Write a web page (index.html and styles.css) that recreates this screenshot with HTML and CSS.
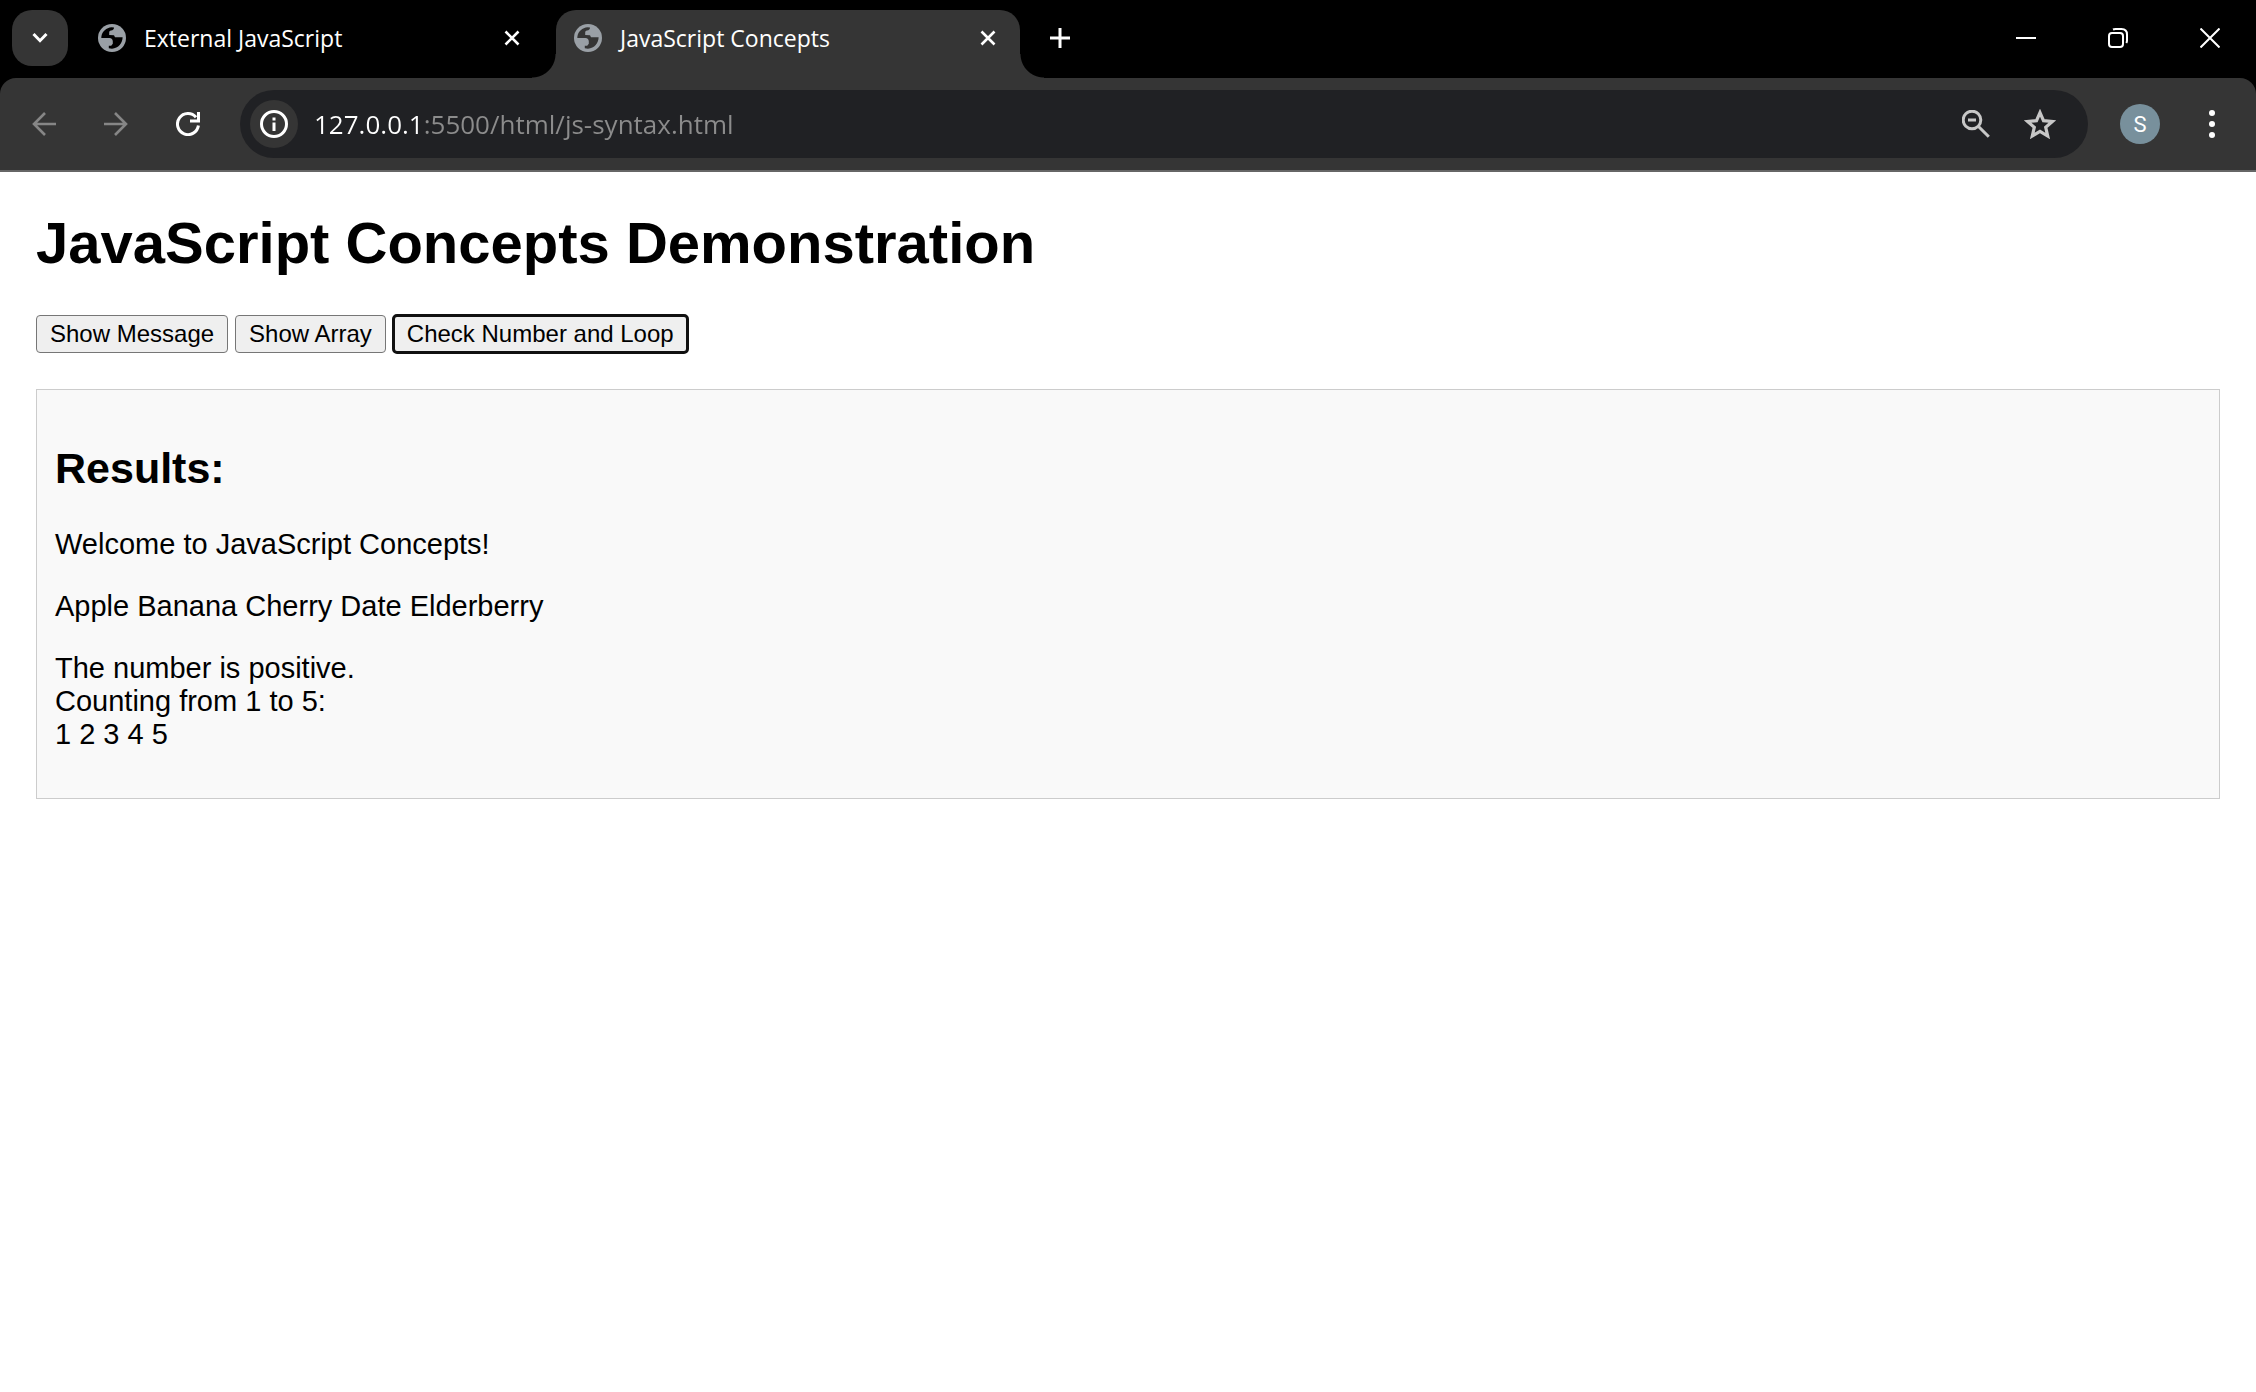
FILE: index.html
```html
<!DOCTYPE html>
<html lang="en">
<head>
<meta charset="utf-8">
<meta name="viewport" content="width=device-width, initial-scale=1">
<title>JavaScript Concepts</title>
<link rel="stylesheet" href="styles.css">
</head>
<body>
<svg class="defs" aria-hidden="true">
  <symbol id="globe" viewBox="0 0 28 28">
    <circle cx="14" cy="14" r="14" fill="#9aa0a6"/>
    <path class="land" d="M3.4 12.5C4 7.6 8.4 3.6 13.6 3.3L16 3.6C16 5.4 15 6.4 13 6.6C11.700 6.700 11.200 7.500 11.200 8.700L11.200 11L16 11.200L17 13.300L24.600 13.300C24.700 18.700 20.400 24.600 14 24.700C12.900 24.700 11.800 24.500 10.800 24.200L10.800 21.800L13.200 21.800L14.800 19.800L14.800 17.500C14.800 15.500 13.500 14.200 11.500 14.100L3.300 14Z"/>
  </symbol>
  <symbol id="close" viewBox="0 0 16 16">
    <path d="M1.500 1.500L14.500 14.500M14.500 1.500L1.500 14.500" fill="none" stroke="currentColor" stroke-width="2.600"/>
  </symbol>
</svg>

<header class="browser">
  <div class="tabstrip">
    <button class="tab-search" type="button" aria-label="Search tabs">
      <svg width="16" height="12" viewBox="0 0 16 12"><path d="M1.500 2L8 8.700L14.500 2" fill="none" stroke="currentColor" stroke-width="3"/></svg>
    </button>
    <div class="tabs">
      <div class="tab">
        <button class="tab-label" type="button"><svg width="28" height="28"><use href="#globe"/></svg><span>External JavaScript</span></button>
        <button class="tab-close" type="button" aria-label="Close tab"><svg width="16" height="16"><use href="#close"/></svg></button>
      </div>
      <div class="tab tab-active">
        <button class="tab-label" type="button"><svg width="28" height="28"><use href="#globe"/></svg><span>JavaScript Concepts</span></button>
        <button class="tab-close" type="button" aria-label="Close tab"><svg width="16" height="16"><use href="#close"/></svg></button>
      </div>
    </div>
    <button class="new-tab" type="button" aria-label="New tab">
      <svg width="20" height="20" viewBox="0 0 20 20"><path d="M10 0V20M0 10H20" stroke="currentColor" stroke-width="3"/></svg>
    </button>
    <div class="window-controls">
      <button type="button" aria-label="Minimize"><svg width="20" height="20" viewBox="0 0 20 20"><path d="M0 10H20" stroke="currentColor" stroke-width="2"/></svg></button>
      <button type="button" aria-label="Restore"><svg width="20" height="20" viewBox="0 0 20 20" fill="none" stroke="currentColor" stroke-width="2"><rect x="1" y="5" width="14" height="14" rx="3"/><path d="M5 1.500Q6 1 7.500 1H13.500Q19 1 19 6.500V12.500Q19 14 18.300 15"/></svg></button>
      <button type="button" aria-label="Close"><svg width="20" height="20" viewBox="0 0 20 20"><path d="M.500 .500L19.500 19.500M19.500 .500L.500 19.500" stroke="currentColor" stroke-width="2"/></svg></button>
    </div>
  </div>

  <div class="toolbar">
    <div class="nav">
      <button class="nav-off" type="button" aria-label="Back"><svg width="24" height="24" viewBox="0 0 24 24" fill="none" stroke="currentColor" stroke-width="2.600"><path d="M24 12H2M13 1L2 12L13 23"/></svg></button>
      <button class="nav-off" type="button" aria-label="Forward"><svg width="24" height="24" viewBox="0 0 24 24" fill="none" stroke="currentColor" stroke-width="2.600"><path d="M0 12H22M11 1L22 12L11 23"/></svg></button>
      <button type="button" aria-label="Reload"><svg width="24" height="24" viewBox="0 0 24 24"><path d="M22.400 13.500A10.500 10.500 0 1 1 20 5.300" fill="none" stroke="currentColor" stroke-width="3"/><path d="M21 0H24V10.500H14V7.500H21Z" fill="currentColor"/></svg></button>
    </div>
    <div class="omnibox">
      <button class="site-info" type="button" aria-label="View site information"><svg width="28" height="28" viewBox="0 0 28 28"><circle cx="14" cy="14" r="12.500" fill="none" stroke="currentColor" stroke-width="3"/><path d="M14 12.500V21M14 7.500V10.500" stroke="currentColor" stroke-width="3"/></svg></button>
      <input class="address" type="text" aria-label="Address" value="127.0.0.1:5500/html/js-syntax.html">
      <button class="action" type="button" aria-label="Zoom"><svg width="28" height="28" viewBox="0 0 28 28" fill="none" stroke="currentColor" stroke-width="3"><circle cx="10" cy="10" r="8.800"/><path d="M16.500 16.500L26.800 26.800M6 10H14"/></svg></button>
      <button class="action" type="button" aria-label="Bookmark this tab"><svg width="32" height="30" viewBox="0 0 32 30"><path d="M16 3.600L19.500 11.700L28.300 12.500L21.700 18.300L23.700 27L16 22.400L8.300 27L10.300 18.300L3.700 12.500L12.500 11.700Z" fill="none" stroke="currentColor" stroke-width="3.200"/></svg></button>
    </div>
    <button class="avatar" type="button" aria-label="Profile">S</button>
    <button class="menu" type="button" aria-label="Menu"><svg width="6" height="28" viewBox="0 0 6 28" fill="currentColor"><circle cx="3" cy="3" r="3"/><circle cx="3" cy="14" r="3"/><circle cx="3" cy="25" r="3"/></svg></button>
  </div>
</header>

<main class="page">
  <h1>JavaScript Concepts Demonstration</h1>
  <div class="buttons">
    <button type="button">Show Message</button>
    <button type="button">Show Array</button>
    <button class="focused" type="button">Check Number and Loop</button>
  </div>
  <section class="results">
    <h2>Results:</h2>
    <p>Welcome to JavaScript Concepts!</p>
    <p>Apple Banana Cherry Date Elderberry</p>
    <p>The number is positive.<br>Counting from 1 to 5:<br>1 2 3 4 5</p>
  </section>
</main>
</body>
</html>
```
FILE: styles.css
```css
* { box-sizing: border-box; }

body {
  margin: 0;
  background: #fff;
  color: #000;
  font-family: "Liberation Sans", Arial, sans-serif;
}

svg { display: block; flex: none; }
.defs { position: absolute; width: 0; height: 0; }

/* Browser frame */
.browser {
  background: #000;
  color: #fff;
  font-family: "Open Sans", "Noto Sans", sans-serif;
}

.browser button {
  display: flex;
  align-items: center;
  justify-content: center;
  padding: 0;
  border: 0;
  background: none;
  color: inherit;
  font: inherit;
}

.tabstrip {
  display: flex;
  height: 78px;
  padding: 10px 0 0 12px;
}

.browser .tab-search {
  width: 56px;
  height: 56px;
  border-radius: 20px;
  background: #353535;
}

.tabs {
  display: flex;
  gap: 12px;
  margin-left: 12px;
}

.tab {
  --tab-color: #000;
  position: relative;
  display: flex;
  width: 464px;
  padding: 0 12px 12px 18px;
  border-radius: 20px 20px 0 0;
  background: var(--tab-color);
}

.tab-active { --tab-color: #353535; }
.land { fill: var(--tab-color); }

.tab-active::before,
.tab-active::after {
  content: "";
  position: absolute;
  bottom: 0;
  width: 24px;
  height: 24px;
}

.tab-active::before {
  right: 100%;
  background: radial-gradient(circle at 0 0, transparent 23px, #353535 24px);
}

.tab-active::after {
  left: 100%;
  background: radial-gradient(circle at 100% 0, transparent 23px, #353535 24px);
}

.browser .tab-label {
  flex: 1;
  justify-content: flex-start;
  gap: 18px;
  font-size: 23px;
}

.browser .tab-close { width: 40px; }

.browser .new-tab {
  width: 56px;
  height: 56px;
  margin-left: 12px;
}

.window-controls {
  display: flex;
  margin-left: auto;
}

.window-controls button {
  width: 92px;
  height: 56px;
}

.toolbar {
  display: flex;
  align-items: center;
  height: 94px;
  border-bottom: 2px solid #666;
  border-radius: 16px 16px 0 0;
  background: #353535;
}

.nav {
  display: flex;
  gap: 16px;
  padding: 0 24px 0 16px;
}

.nav button {
  width: 56px;
  height: 56px;
}

.browser .nav-off { color: #868686; }

.omnibox {
  flex: 1;
  display: flex;
  align-items: center;
  height: 68px;
  padding: 0 16px 0 10px;
  border-radius: 34px;
  background: #202124;
}

.browser .site-info {
  width: 48px;
  height: 48px;
  border-radius: 50%;
  background: #353535;
}

/* The host part of the address is brighter than the path */
.address {
  flex: 1;
  min-width: 0;
  margin-left: 16px;
  padding: 0;
  border: 0;
  outline: 0;
  background: linear-gradient(to right, #fff 108px, #8c8c8c 108px);
  background-clip: text;
  color: transparent;
  font-family: inherit;
  font-size: 26px;
}

.browser .action {
  width: 64px;
  height: 56px;
  color: #c7c7c7;
}

.browser .avatar {
  width: 40px;
  height: 40px;
  margin: 0 32px;
  border-radius: 50%;
  background: #78909c;
  font-family: Roboto, sans-serif;
  font-size: 22px;
}

.browser .menu {
  width: 40px;
  height: 56px;
  margin-right: 24px;
}

/* Document */
.page {
  padding: 37px 36px 36px;
  font-size: 29px;
  line-height: 33px;
}

h1 {
  margin: 0 0 39px;
  font-size: 58px;
  line-height: 67px;
}

.buttons {
  display: flex;
  flex-wrap: wrap;
  gap: 7px;
}

.buttons button {
  height: 38px;
  padding: 0 13px;
  border: 1px solid #767676;
  border-radius: 4px;
  background: #efefef;
  color: #000;
  font-family: inherit;
  font-size: 24px;
  line-height: 28px;
}

.buttons .focused {
  outline: 3px solid #101010;
  outline-offset: -2px;
}

.results {
  margin-top: 36px;
  padding: 18px;
  border: 1px solid #ccc;
  background: #f9f9f9;
}

h2 {
  margin: 36px 0;
  font-size: 43px;
  line-height: 48px;
}

p { margin: 29px 0; }
```
